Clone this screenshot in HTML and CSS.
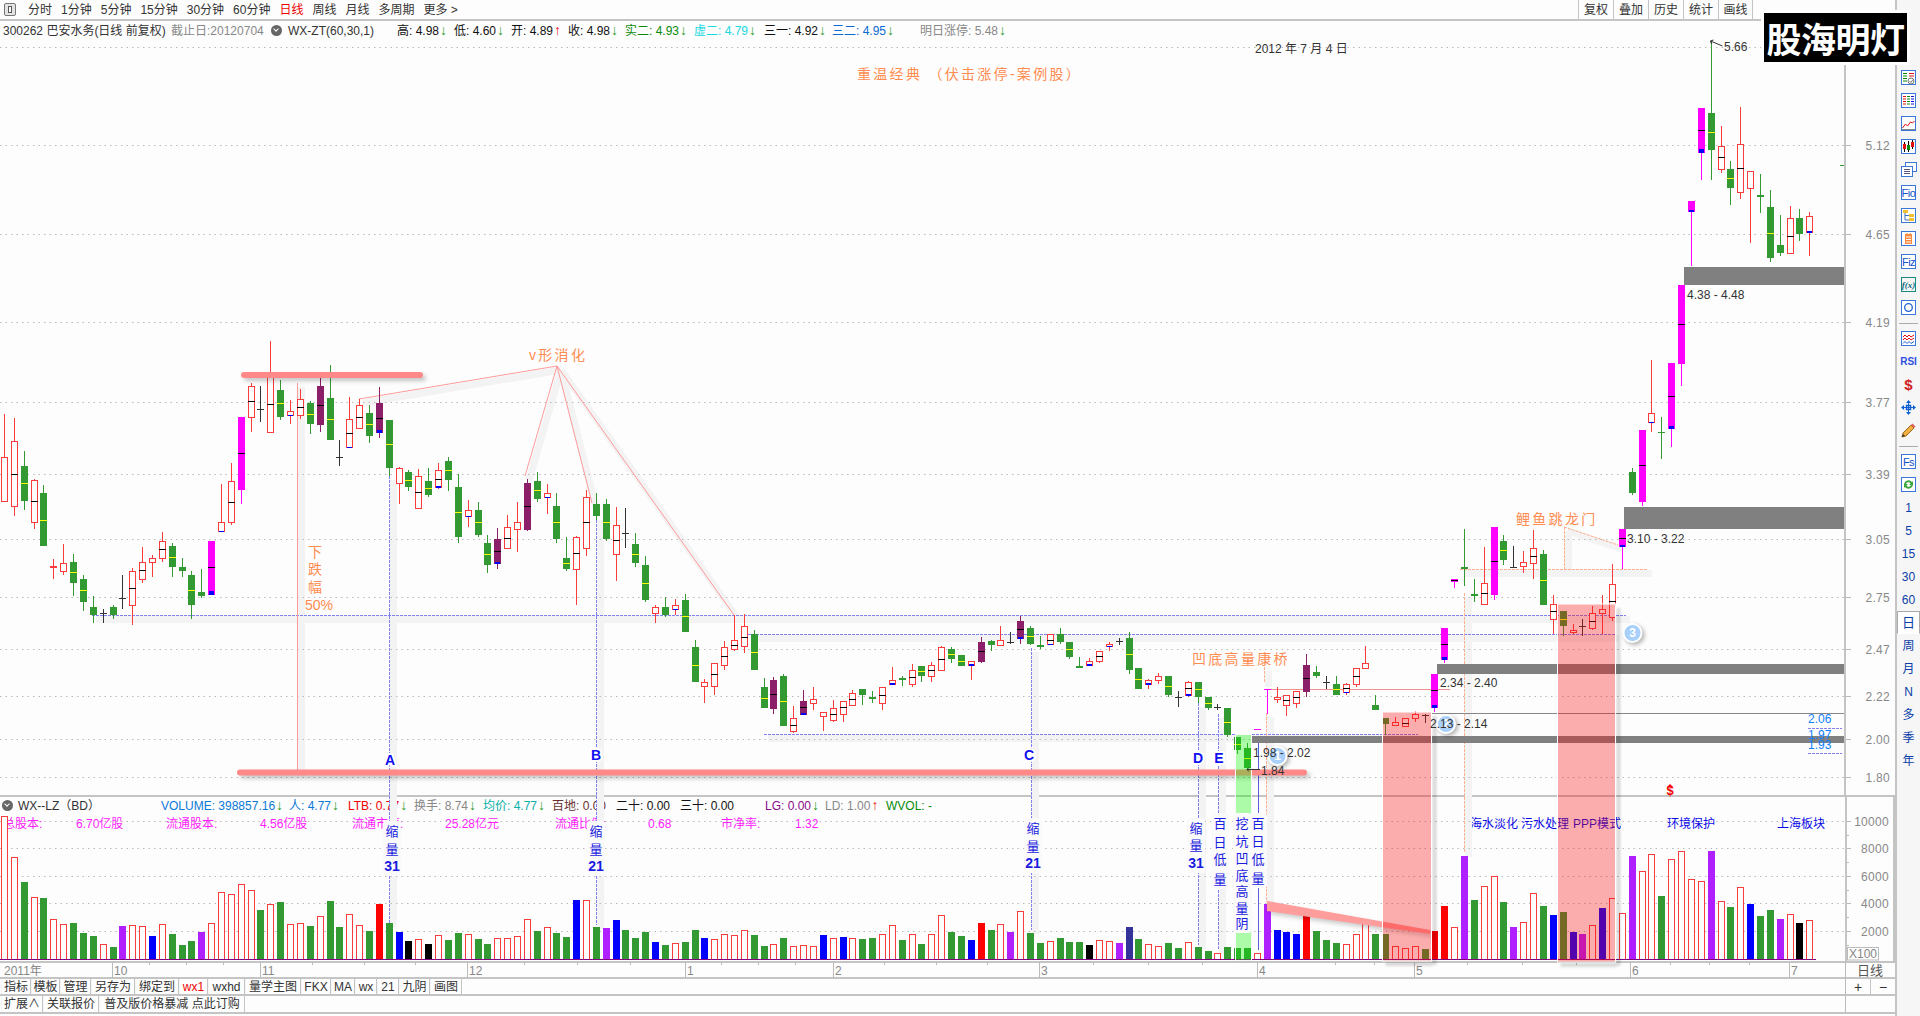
FILE: index.html
```html
<!DOCTYPE html>
<html lang="zh-CN">
<head>
<meta charset="utf-8">
<title>300262 巴安水务 日线</title>
<link rel="stylesheet" href="styles.css">
</head>
<body>
<div class="app">
  <main class="stage">
    <header class="topbar">
      <span class="layout-icon"><span class="layout-icon-inner"></span></span>
      <nav class="periods">
        <span>分时</span><span>1分钟</span><span>5分钟</span><span>15分钟</span><span>30分钟</span><span>60分钟</span><span class="active">日线</span><span>周线</span><span>月线</span><span>多周期</span><span>更多 &gt;</span>
      </nav>
      <nav class="tools">
        <span>复权</span><span>叠加</span><span>历史</span><span>统计</span><span>画线</span>
      </nav>
    </header>
    <div class="infobar">
      <span>300262 巴安水务(日线 前复权)</span>
      <span class="gray">截止日:20120704</span>
      <span class="dot"></span>
      <span>WX-ZT(60,30,1)</span>
      <span class="black">高: 4.98<i class="dn">↓</i></span>
      <span class="black">低: 4.60<i class="dn">↓</i></span>
      <span class="black">开: 4.89<i class="up">↑</i></span>
      <span class="black">收: 4.98<i class="dn">↓</i></span>
      <span class="green">实二: 4.93<i class="dn">↓</i></span>
      <span class="cyan">虚二: 4.79<i class="dn">↓</i></span>
      <span class="black">三一: 4.92<i class="dn">↓</i></span>
      <span class="blue">三二: 4.95<i class="dn">↓</i></span>
      <span class="gray">明日涨停: 5.48<i class="dn">↓</i></span>
    </div>
    <div class="pricepane"></div>
    <section class="volpane">
      <div class="volhead">
        <span class="dot"></span>
        <span>WX--LZ（BD）</span>
        <span class="blue2">VOLUME: 398857.16<i class="dn">↓</i></span>
        <span class="blue2">人: 4.77<i class="dn">↓</i></span>
        <span class="red">LTB: 0.77<i class="dn">↓</i></span>
        <span class="gray">换手: 8.74<i class="dn">↓</i></span>
        <span class="teal">均价: 4.77<i class="dn">↓</i></span>
        <span class="brown">百地: 0.00</span>
        <span class="black">二十: 0.00</span>
        <span class="black">三十: 0.00</span>
        <span class="purple">LG: 0.00<i class="dn">↓</i></span>
        <span class="gray">LD: 1.00<i class="up">↑</i></span>
        <span class="green">WVOL: -</span>
      </div>
      <div class="volfacts">
        <span>总股本:</span><span>6.70亿股</span><span>流通股本:</span><span>4.56亿股</span><span>流通市值:</span><span>25.28亿元</span><span>流通比例:</span><span>0.68</span><span>市净率:</span><span>1.32</span>
        <span class="concept">海水淡化</span><span class="concept">污水处理</span><span class="concept">PPP模式</span><span class="concept">环境保护</span><span class="concept">上海板块</span>
      </div>
    </section>
    <div class="dateaxis"><span class="period-name">日线</span></div>
    <div class="btnrow">
      <span>指标</span><span>模板</span><span>管理</span><span>另存为</span><span>绑定到</span><span class="btn-red">wx1</span><span>wxhd</span><span>量学主图</span><span>FKX</span><span>MA</span><span>wx</span><span>21</span><span>九阴</span><span>画图</span>
      <div class="zoom-btns"><span>+</span><span>−</span></div>
    </div>
    <div class="btnrow btnrow-low">
      <span>扩展∧</span><span>关联报价</span><span>普及版价格暴减 点此订购</span>
    </div>
    <svg id="chart" class="chart" width="1895" height="1016" viewBox="0 0 1895 1016"></svg>
  </main>

  <aside class="sidebar">
    <span class="tool"><svg width="15" height="15" viewBox="0 0 15 15"><rect class="ib" x=".5" y=".5" width="14" height="14"/><path d="M2 3.500h4M2 6h4M2 8.500h4M2 11h4" stroke="#0a8a0a"/><path d="M8 3.500h5M8 6h5" stroke="#e01010"/><circle cx="10" cy="11" r="3" fill="#fff" stroke="#777"/><path d="M8.500 11l1.500 1.500 2-3" fill="none" stroke="#777"/></svg></span>
    <span class="tool"><svg width="15" height="15" viewBox="0 0 15 15"><rect class="ib" x=".5" y=".5" width="14" height="14"/><path d="M2 3.500h3M2 6h3M2 8.500h3M2 11h3" stroke="#e01010"/><path d="M6 3.500h3M6 6h3M6 8.500h3M6 11h3" stroke="#0a8a0a"/><path d="M10 3.500h3M10 6h3M10 8.500h3M10 11h3" stroke="#1010e0"/></svg></span>
    <span class="tool"><svg width="15" height="15" viewBox="0 0 15 15"><rect class="ib" x=".5" y=".5" width="14" height="14"/><path d="M1.500 12l3-4 2 2 3-4 2 1 2-2" fill="none" stroke="#e01010"/><path d="M1 13.500h13" stroke="#888"/></svg></span>
    <span class="tool"><svg width="15" height="15" viewBox="0 0 15 15"><rect class="ib" x=".5" y=".5" width="14" height="14"/><path d="M3.500 3v10M7.500 2v11M11.500 1v9" stroke="#000"/><rect x="2" y="5" width="3" height="5" fill="#e01010"/><rect x="6" y="6" width="3" height="5" fill="#0a8a0a"/><rect x="10" y="3" width="3" height="5" fill="#e01010"/></svg></span>
    <span class="tool"><svg width="16" height="15" viewBox="0 0 16 15"><rect class="ib" x="4.500" y=".5" width="11" height="9"/><rect class="ib" x=".5" y="4.500" width="11" height="10"/><path d="M3 7.500h6M3 9.500h6M3 11.500h6" stroke="#557"/></svg></span>
    <span class="tool tbox">Fio</span>
    <span class="tool"><svg width="15" height="15" viewBox="0 0 15 15"><rect class="ib" x=".5" y=".5" width="14" height="14"/><rect x="2" y="2" width="5" height="3" fill="#f0c030"/><rect x="8" y="6" width="5" height="3" fill="#f0c030"/><rect x="8" y="10" width="5" height="3" fill="#f0c030"/><path d="M4 5v7h4M4 7.500h4" fill="none" stroke="#4070c0"/></svg></span>
    <span class="tool"><svg width="15" height="15" viewBox="0 0 15 15"><rect class="ib" x=".5" y=".5" width="14" height="14"/><rect x="4" y="3" width="7" height="10" fill="#fa8a40"/><path d="M6 2v2M9 2v2" stroke="#fa8a40"/><path d="M5 6h5M5 8.500h5M5 11h5" stroke="#fff"/></svg></span>
    <span class="tool tbox">Fiz</span>
    <span class="tool tfx">f(x)</span>
    <span class="tool"><svg width="15" height="15" viewBox="0 0 15 15"><rect class="ib" x=".5" y=".5" width="14" height="14"/><circle cx="7.500" cy="7.500" r="3.800" fill="none" stroke="#2060d0" stroke-width="1.300"/></svg></span>
    <span class="sep"></span>
    <span class="tool"><svg width="15" height="15" viewBox="0 0 15 15"><rect class="ib" x=".5" y=".5" width="14" height="14"/><path d="M2 6l2-2 2 2 2-2 2 2 3-2M2 9l2-2 2 2 2-2 2 2 3-2" fill="none" stroke="#e01010"/><path d="M2 12.500l2-2 2 2 2-2 2 2 3-2" fill="none" stroke="#2060d0"/></svg></span>
    <span class="tool trsi">RSI</span>
    <span class="tool tdollar">$</span>
    <span class="tool"><svg width="15" height="15" viewBox="0 0 15 15"><path d="M7.500 0l2.500 3h-5zM7.500 15l2.500-3h-5zM0 7.500l3-2.500v5zM15 7.500l-3-2.500v5z" fill="#1060d0"/><rect x="5.500" y="5.500" width="4" height="4" fill="none" stroke="#1060d0" stroke-width="1.500"/><path d="M7.500 3v9M3 7.500h9" stroke="#1060d0"/></svg></span>
    <span class="tool"><svg width="15" height="15" viewBox="0 0 15 15"><path d="M1 14l1-4 8-8 3 3-8 8z" fill="#f0b040" stroke="#a06820"/><path d="M10 2l1.500-1.500 3 3-1.500 1.500z" fill="#e06060"/><path d="M1 14l1-3 2 2z" fill="#333"/></svg></span>
    <span class="sep"></span>
    <span class="tool tbox">Fs</span>
    <span class="tool"><svg width="15" height="15" viewBox="0 0 15 15"><rect class="ib" x=".5" y=".5" width="14" height="14"/><path d="M3 7a4.500 4.500 0 0 1 8-2l1-1v4H8l1.500-1.500A2.500 2.500 0 0 0 5 7zM12 8a4.500 4.500 0 0 1-8 2l-1 1V7h4L5.500 8.500A2.500 2.500 0 0 0 10 8z" fill="#3aa83a"/></svg></span>
    <span class="tool num">1</span>
    <span class="tool num">5</span>
    <span class="tool num">15</span>
    <span class="tool num">30</span>
    <span class="tool num">60</span>
    <span class="tool num cur">日</span>
    <span class="tool num">周</span>
    <span class="tool num">月</span>
    <span class="tool num">N</span>
    <span class="tool num">多</span>
    <span class="tool num">季</span>
    <span class="tool num">年</span>
  </aside>

  <div class="logo">股海明灯</div>
</div>
<script src="chart.js"></script>
</body>
</html>
```
FILE: styles.css
```css
* { box-sizing: border-box; }
html, body { margin: 0; height: 100%; overflow: hidden; background: #fdfdfd; }
body { font: 12px/1 "Liberation Sans", "Noto Sans CJK SC", sans-serif; color: #333; }
.app { position: relative; display: flex; width: 1920px; height: 1016px; }
.stage { position: relative; display: flex; flex-direction: column; width: 1895px; height: 1016px; }

.topbar { display: flex; align-items: center; height: 21px; border-bottom: 2px solid #c4c4c4; padding-left: 4px; background: #fdfdfd; flex: none; }
.layout-icon { display: flex; align-items: center; justify-content: center; width: 12px; height: 13px; border: 1px solid #777; border-radius: 2px; background: #e4e4e4; }
.layout-icon-inner { width: 4px; height: 7px; border: 1px solid #555; background: #fff; }
.periods { display: flex; gap: 9px; margin-left: 12px; }
.active { color: #f00000; }
.tools { display: flex; margin-left: auto; margin-right: 142px; height: 19px; }
.tools span { width: 35px; border-left: 1px solid #c4c4c4; display: flex; align-items: center; justify-content: center; }
.tools span:last-child { border-right: 1px solid #c4c4c4; }

.infobar { display: grid; grid-template-columns: 168px 100px 17px 109px 57px 57px 57px 57px 69px 70px 68px 88px auto; align-items: center; height: 19px; padding-left: 3px; flex: none; white-space: nowrap; }
.dot { width: 11px; height: 11px; border-radius: 50%; background: #666; position: relative; display: block; }
.dot::after { content: ""; position: absolute; left: 3px; top: 2px; width: 3px; height: 3px; border-right: 1px solid #fff; border-bottom: 1px solid #fff; transform: rotate(45deg); }
i { font-style: normal; font-size: 14px; line-height: 0; margin-left: 1px; }
.dn { color: #2a9a2a; }
.up { color: #f02020; }
.gray { color: #888; }
.black { color: #111; }
.green { color: #0a8a0a; }
.cyan { color: #20d8e0; }
.blue { color: #0a6ad0; }
.blue2 { color: #0a7ad8; }
.red { color: #f00000; }
.teal { color: #08b0a8; }
.brown { color: #6a3030; }
.purple { color: #8a0a8a; }

.pricepane { flex: none; height: 757px; border-bottom: 2px solid #c4c4c4; }
.volpane { flex: none; height: 166px; border-bottom: 2px solid #c4c4c4; white-space: nowrap; }
.volhead { display: grid; grid-template-columns: 16px 143px 128px 59px 66px 69px 69px 64px 64px 85px 60px 61px auto; align-items: center; height: 17px; padding-left: 2px; }
.volfacts { display: grid; grid-template-columns: 73px 90px 94px 92px 93px 110px 93px 73px 74px 675px 51px 52px 94px 110px auto; align-items: center; height: 19px; padding-left: 3px; color: #ff20ff; }
.concept { color: #0808e8; }

.dateaxis { flex: none; height: 16px; display: flex; justify-content: flex-end; border-bottom: 2px solid #c4c4c4; color: #555; }
.period-name { width: 50px; display: flex; align-items: center; justify-content: center; font-size: 13px; }
.btnrow { flex: none; display: flex; height: 17px; border-bottom: 2px solid #c4c4c4; padding-left: 1px; color: #333; white-space: nowrap; }
.btnrow > span { display: flex; align-items: center; justify-content: center; flex: none; border-right: 1px solid #c4c4c4; border-left: 1px solid #f4f4f4; }
.btnrow > span:nth-child(1) { width: 30px; }
.btnrow > span:nth-child(2) { width: 29px; }
.btnrow > span:nth-child(3) { width: 31px; }
.btnrow > span:nth-child(4) { width: 44px; }
.btnrow > span:nth-child(5) { width: 44px; }
.btnrow > span:nth-child(6) { width: 29px; }
.btnrow > span:nth-child(7) { width: 37px; }
.btnrow > span:nth-child(8) { width: 56px; }
.btnrow > span:nth-child(9) { width: 30px; }
.btnrow > span:nth-child(10) { width: 24px; }
.btnrow > span:nth-child(11) { width: 22px; }
.btnrow > span:nth-child(12) { width: 22px; }
.btnrow > span:nth-child(13) { width: 31px; }
.btnrow > span:nth-child(14) { width: 32px; }
.btn-red { color: #f00000; }
.zoom-btns { display: flex; margin-left: auto; width: 50px; }
.zoom-btns span { flex: 1; display: flex; align-items: center; justify-content: center; border-left: 1px solid #c4c4c4; font-size: 14px; }
.btnrow-low { height: 18px; }
.btnrow-low > span:nth-child(1) { width: 42px; }
.btnrow-low > span:nth-child(2) { width: 56px; }
.btnrow-low > span:nth-child(3) { width: 146px; }

.chart { position: absolute; left: 0; top: 0; pointer-events: none; }

.sidebar { width: 25px; height: 1016px; padding-top: 66px; border-left: 2px solid #c4c4c4; background: #f6f6f6; display: flex; flex-direction: column; align-items: center; flex: none; }
.tool { height: 23px; width: 23px; flex: none; display: flex; align-items: center; justify-content: center; color: #1450c8; }
.ib { fill: #fff; stroke: #3a78d8; }
.sep { flex: none; width: 19px; height: 1px; background: #aaa; margin: 4px 0 3px; }
.tbox { font: 400 11px "Liberation Sans", sans-serif; letter-spacing: -.5px; background: #fff; background-clip: content-box; padding: 4px; box-shadow: inset 0 0 0 4px #f6f6f6, inset 0 0 0 5px #3a78d8; }
.tfx { font: italic 700 9px "Liberation Serif", serif; color: #0a6a80; box-shadow: inset 0 0 0 4px #f6f6f6, inset 0 0 0 5px #1a8a80; }
.trsi { font: 700 10px "Liberation Sans", sans-serif; color: #3050e0; }
.tdollar { font: 700 15px "Liberation Sans", sans-serif; color: #d02020; }
.num { font-size: 12px; color: #0a3ea8; }
.cur { background: #fff; border: 1px solid #aaa; border-bottom-color: #fff; font-size: 13px; }

.logo { position: absolute; left: 1761px; top: 10px; width: 149px; height: 55px; border: 3px solid #fff; background: #000; color: #fff; font: 700 35px/49px "Noto Sans CJK SC", sans-serif; text-align: center; letter-spacing: -.5px; white-space: nowrap; overflow: hidden; }

/* chart */
.grid { stroke: #bbb; stroke-dasharray: 1.5 4; stroke-width: 1; }
.solid { stroke: #bbb; }
.crisp { shape-rendering: crispEdges; }
.s-r { stroke: #fa3c3c; fill: none; }
.s-g { stroke: #339933; fill: none; }
.s-m { stroke: #ff00ff; fill: none; }
.s-p { stroke: #8b2068; fill: none; }
.s-d { stroke: #333; fill: none; }
.hollow { fill: #fdfdfd; stroke: #fa3c3c; }
.vhollow { fill: #fdfdfd; stroke: #fa3c3c; }
.f-g { fill: #339933; }
.f-m { fill: #ff00ff; }
.f-p { fill: #8b2068; }
.f-b { fill: #0000ff; }
.f-k { fill: #000; }
.f-v { fill: #b01fff; }
.f-R { fill: #ff0000; }
.f-n { fill: #333399; }
.mid-y { stroke: #ffff00; }
.mid-k { stroke: #000; }
.base { stroke: #800080; }
.band { fill: #808080; }
.hline { stroke: #888; }
.lshadow { stroke: #f3f3f3; stroke-width: 7; fill: none; }
.dash { stroke: #8080f4; stroke-dasharray: 3 1; fill: none; }
.dash-o { stroke: #ffb090; stroke-dasharray: 3 1; fill: none; }
.lblue { stroke: #5a5ae0; }
.lred { stroke: #ff9a9a; fill: none; }
.lred2 { stroke: #f09090; }
.redbar { stroke: #ff8888; stroke-width: 6; stroke-linecap: round; filter: drop-shadow(3px 3px 2px rgba(0,0,0,.22)); }
.wedge { fill: #ff9c9c; filter: drop-shadow(3px 3px 2px rgba(0,0,0,.2)); }
.ov-r { fill: rgba(250,10,10,.33); stroke: #fff; }
.ov-sh { fill: rgba(0,0,0,.14); filter: blur(1px); }
.ov-g { fill: rgba(10,250,0,.33); stroke: #f8f8f8; }
.halo { fill: #fafafa; }
text { font-family: "Liberation Sans", "Noto Sans CJK SC", sans-serif; font-size: 12px; }
.t-axis { fill: #888; text-anchor: end; letter-spacing: .3px; }
.t-date { fill: #888; }
.t-dark { fill: #333; }
.t-or { fill: #ff8c50; font-size: 14px; letter-spacing: 2.3px; }
.t-or2 { fill: #ff8c50; font-size: 14px; text-anchor: middle; }
.t-abc { fill: #1010f0; font-weight: 700; font-size: 14px; text-anchor: middle; paint-order: stroke; stroke: #fff; stroke-width: 4px; }
.t-vert { fill: #1a1ae0; font-size: 13px; text-anchor: middle; }
.t-vert.n { font-weight: 700; font-size: 14px; }
.t-lab { fill: #1080ff; }
.t-circ { fill: #fff; font-weight: 700; text-anchor: middle; }
.t-s { fill: #f00000; font-weight: 700; font-size: 13px; text-anchor: middle; }
.circ { fill: #a8d0fa; stroke: #fff; stroke-width: 2; filter: drop-shadow(2px 2px 2px rgba(0,0,0,.3)); }
.tick-g { stroke: #339933; }
.t-x100 { fill: #888; }
.boxline { stroke: #bbb; fill: none; }
.boxline2 { stroke: #c4c4c4; stroke-width: 2; fill: none; }
```
FILE: chart.js
```js
// Day-bar data read as [high, top, bottom, low, type, mid, blueHeight]
// y values are in 3x units relative to each segment's origin.
const segments = [
  [340, [
    [222,352,485,485,'r'],[234,304,500,528,'r',403],[333,378,483,510,'g',430],[418,421,548,567,'r',484],[435,459,618,618,'g',541],
    [658,677,683,717,'r'],[612,670,695,705,'r'],[642,666,729,768,'g',697],[705,717,786,813,'g',751],[768,801,826,849,'g'],
    [807,820,821,849,'d'],[795,801,826,837,'g'],[705,775,776,807,'d'],[685,694,797,855,'r',745],[621,667,719,729,'r',691],
    [645,655,670,711,'r'],[576,604,656,666,'r',628],[609,618,681,711,'g',652],[654,681,693,711,'g'],[693,705,795,837,'g',751],
    [687,756,768,774,'g'],[603,603,765,765,'m',682,4],[432,547,575,575,'r',null,1],[369,424,548,555,'r',487],[231,231,450,492,'m',340],
    [129,139,233,276,'r',184],[138,208,209,246,'d'],[3,112,278,278,'r',193],[120,150,231,240,'g',190],[180,214,228,252,'r',null,1],
    [147,178,228,237,'r',202],[183,189,252,282,'g',223],[108,138,255,276,'p',196],[75,174,300,300,'g',238],[300,352,353,378,'d'],
    [171,238,324,324,'r',280,1],[178,196,266,266,'r',232],[195,219,288,309,'g',253],[141,189,279,294,'p',235,3],[240,240,384,408,'g',313],
    [381,385,431,492,'r'],[390,396,441,453,'g',421],[387,409,506,506,'r',457],[384,423,465,471,'g',445],[369,391,444,447,'r',418,2],
    [351,363,420,453,'g',391],[402,441,591,609,'g',517],[480,511,530,561,'r',null,1],[486,510,585,591,'g',547],
    [585,609,675,699,'g',643],[564,597,672,687,'p',634,2],[525,562,626,626,'r',595],[486,547,569,636,'r'],[418,429,570,573,'p',498],
    [396,423,477,486,'g',451],[432,460,473,522,'r',null,1],[459,498,597,609,'g',547],[591,654,687,693,'g',669],[588,592,689,795,'r',639],
    [450,472,626,648,'r',547],[459,492,528,540,'g'],[477,492,597,603,'g',547],[501,556,644,723,'r',601],[504,579,581,624,'d'],
    [579,612,669,681,'g',642],[648,675,780,786,'g',730],[795,802,821,849,'r'],[772,801,826,831,'g'],[777,796,809,825,'r',null,1],
    [762,780,876,876,'g',829],[900,921,1026,1026,'g',976],[1017,1027,1040,1089,'r'],[970,970,1040,1065,'r',1003],[903,922,977,990,'r',949],
    [825,901,929,932,'r',916],[822,859,922,939,'r',892],[870,882,990,990,'g',937],[1014,1041,1104,1104,'g',1075],[1011,1020,1107,1122,'p',1063],
    [1002,1008,1158,1158,'g',1084],[1098,1135,1175,1179,'r',1156],[1050,1083,1125,1125,'p',1102,2],[1041,1078,1091,1110,'r'],[1117,1117,1130,1173,'r'],
    [1080,1105,1142,1145,'r',1123],[1084,1084,1124,1146,'r',1102],[1050,1060,1097,1097,'r',1078],[1047,1047,1065,1095,'g'],[1053,1072,1076,1089,'g'],
    [1042,1042,1091,1110,'r',1066],[981,1021,1034,1034,'r',null,2],[1008,1014,1019,1038,'g'],[972,991,1034,1041,'r',1012],[978,978,1008,1026,'g',994],
    [966,976,1010,1026,'r',991],[918,922,992,992,'r',958],[921,927,957,969,'g',943],[945,945,978,978,'g',962]
  ]],
  [480, [
    [544,544,558,600,'r',null,2],[471,486,546,549,'p',514],[480,484,495,513,'g'],[438,481,498,498,'r'],[456,487,488,492,'d'],
    [408,423,477,492,'p',448,2],[438,444,492,495,'g',468],[468,496,500,507,'g'],[462,463,496,496,'r',481,1],[444,462,486,492,'g'],
    [486,486,531,537,'g',508],[531,558,564,564,'g'],[534,544,557,557,'r',null,2],[513,514,545,549,'r',529],[486,493,502,513,'r',null,1],
    [474,483,484,495,'d'],[456,474,570,582,'g',523],[564,564,627,627,'g',598],[597,601,614,627,'r',null,2],[579,589,603,612,'r'],
    [588,588,645,651,'g',619],[633,652,653,681,'d'],[603,607,648,651,'r',625,2],[606,606,651,669,'g',628],[651,651,684,690,'g',670],
    [672,681,682,690,'d'],[684,684,765,771,'g',727],[771,771,810,822,'g',793],[789,804,864,870,'g',835],[748,748,750,748,'m'],
    [628,628,630,702,'m'],[621,652,659,669,'r'],[646,646,677,708,'r',661],[633,634,671,684,'r',652],[522,555,636,651,'p',595],
    [558,576,588,594,'g'],[588,607,608,627,'d'],[588,612,645,645,'g',628],[609,613,640,645,'r',625,1],[564,565,614,621,'r',589],
    [498,550,566,566,'r'],[645,675,690,690,'g'],[714,714,732,765,'g'],[712,727,739,739,'r'],[715,715,742,742,'r',730],
    [693,703,718,726,'r'],[702,706,707,730,'d'],[582,582,684,696,'m',631,3],
    [444,444,540,549,'m',493,3],[297,298,305,324,'m',301],[148,262,267,318,'g'],[297,343,347,366,'g'],[201,310,374,374,'r',340],
    [141,141,345,360,'m',244],[165,183,240,255,'g',211],[198,262,263,264,'d'],[213,247,262,279,'r'],[150,205,252,297,'r',229],
    [210,222,375,375,'g',300],[345,373,419,462,'r',394],[393,393,438,468,'g',417],[432,451,458,462,'r'],[417,438,439,468,'d'],
    [378,400,447,450,'r',424],[345,388,401,462,'r'],[252,313,413,423,'r',364],[148,148,200,267,'m',175,2]
  ]],
  [350, [
    [354,366,429,435,'g'],[240,240,456,468,'m',346],[30,190,218,246,'r',null,1],[201,247,250,327,'g'],[39,39,237,291,'m',139,3]
  ]],
  [30, [
    [765,765,1002,1068,'m',883],[513,513,546,708,'m',null,2],[234,234,369,450,'m',301,4],[33,249,360,450,'g',307],[288,349,419,429,'r',382],
    [393,417,474,525,'g',445],[231,343,488,507,'r',415],[424,424,476,639,'r'],[432,496,500,549,'g'],[480,531,684,696,'g',610],
    [555,645,669,678,'g'],[528,565,671,671,'r',619],[537,564,612,633,'g'],[546,559,609,678,'r',null,2]
  ]]
];

// Volume: top (3x units from y=780) + colour code for each bar, same order as days.
const volume = `
109r 232r 306g 352r 354g 418r 433r 429g 459g 468g
493r 501g 438v 436r 439r 468b 433r 462g 495g 483g
456v 430r 337r 343r 313r 331r 390g 372r 366g 433r
430r 438g 409r 363g 441g 403r 436r 453g 372R 429g
456b 483k 478r 492k 466r 480g 459g 463r 477g 492g
475r 475r 469r 418r 453g 441r 459g 471g 360b 361r
441g 444v 420b 450g 474g 456g 486b 495g 489r 486g
450g 474b 478r 462r 465r 450r 465g 498g 492r 474g
498r 495r 498r 465b 474r 471b 474r 477g 474g 462r
435r 480g 462r 492g 462r 405r 456g 468g 480b 429R
450g 432r 456v 393r 459g 489g 483r 474g 486g 486g
495k 480r 483r 489v 441n 477g 492r 498r 489g 504g
486r 501g 513g 519r 501g 504g 504g 519r 372v 450b
456b 462b 387R 453g 480g 489g 492r 462r 426r 462g
462g 498r 504r 498r 507g 453R 378R 441r 228v 360g
318r 288r 366g 441v 426r 339r 378g 405b 396g 456b
462v 435r 384b 354r 399r 228v 273r 222r 348g 237r
213r 297r 303r 213v 363r 381g 321r 372b 408g 390g
417v 402r 429k 420r`;

const GRID = [47,145,234,322,402,474,539,597,649,696,739,777];
const X = i => Math.floor(4.5 + 9.865 * i);
const out = { shadow: '', grid: '', lines: '', bars: '', bands: '', over: '', top: '' };

const line = (x1, y1, x2, y2, cls) => `<line x1="${x1}" y1="${y1}" x2="${x2}" y2="${y2}" class="${cls}"/>`;
const rect = (x, y, w, h, cls) => `<rect x="${x}" y="${y}" width="${w}" height="${h}" class="${cls}"/>`;
const text = (x, y, s, cls) => `<text x="${x}" y="${y}" class="${cls}">${s}</text>`;

function sline(x1, y1, x2, y2, cls) {
  out.shadow += line(x1 + 4, y1 + 4, x2 + 4, y2 + 4, 'lshadow');
  out.lines += line(x1, y1, x2, y2, cls);
}

// ---- grid
const priceLabels = { 145:'5.12', 234:'4.65', 322:'4.19', 402:'3.77', 474:'3.39', 539:'3.05', 597:'2.75', 649:'2.47', 696:'2.22', 739:'2.00', 777:'1.80' };
GRID.forEach(y => {
  out.grid += line(0, y + .5, 1844, y + .5, 'grid');
  if (priceLabels[y]) {
    out.grid += line(1845, y + .5, 1851, y + .5, 'solid');
    out.grid += text(1890, y + 4.5, priceLabels[y], 't-axis');
  }
});
[[821,'10000'],[848,'8000'],[876,'6000'],[903,'4000'],[931,'2000']].forEach(([y, s]) => {
  out.grid += line(0, y + .5, 1844, y + .5, 'grid');
  out.grid += line(1846, y + .5, 1851, y + .5, 'solid');
  out.grid += line(1846, y + 14.5, 1849, y + 14.5, 'solid');
  out.grid += text(1889, y + 4.5, s, 't-axis');
});
// ---- axis frame
out.grid += line(1845, 60, 1845, 796, 'boxline2');
out.grid += line(1846, 796, 1846, 961, 'boxline2');
out.grid += line(1845.5, 961, 1845.5, 1013, 'boxline');
out.grid += line(1894, 796, 1894, 961, 'boxline2');
out.grid += line(1840, 165.5, 1844, 165.5, 'tick-g');
out.grid += `<rect x="1847.500" y="947.500" width="31" height="12.500" class="boxline"/>`;
out.grid += text(1849, 958, 'X100', 't-x100');

// ---- date axis
[[4,'2011年',0],[114,'10',112],[262,'11',260],[469,'12',467],[687,'1',685],[835,'2',833],[1041,'3',1039],[1259,'4',1257],[1416,'5',1414],[1632,'6',1630],[1791,'7',1789]].forEach(([x, s, t]) => {
  if (t) out.grid += line(t + .5, 962, t + .5, 978, 'solid');
  out.grid += text(x, 975, s, 't-date');
});
[149,186,223,312,364,415,524,577,630,721,758,795,884,936,987,1093,1148,1202,1335,1374,1467,1522,1576,1670,1709,1749].forEach(x => {
  out.grid += line(x + .5, 962, x + .5, 965, 'solid');
});

// ---- connecting lines
const D = 'dash crisp';
sline(389.5, 476, 389.5, 923, D);
sline(596.5, 516, 596.5, 925, D);
sline(1031.5, 648, 1031.5, 930, D);
sline(1198.5, 703, 1198.5, 945, D);
sline(1218.5, 714, 1218.5, 950, D);
sline(92, 615.5, 1626, 615.5, D);
sline(748, 634.5, 1615, 634.5, D);
sline(764, 734.5, 1418, 734.5, D);
sline(297.5, 383, 297.5, 772, 'lred');
sline(359, 399, 557, 366, 'lred');
sline(525, 476, 557, 366, 'lred');
sline(592, 503, 557, 366, 'lred');
sline(734, 615, 557, 366, 'lred');
sline(1266.5, 713, 1266.5, 902, 'dash-o');
sline(1464.5, 593, 1464.5, 853, 'dash-o');
sline(1460, 569.5, 1648, 569.5, 'dash-o');
sline(1564.5, 527, 1564.5, 569, 'dash-o');
sline(1564, 527, 1618, 545, 'dash-o');
sline(1264.5, 667, 1264.5, 683, 'dash-o');
out.lines += line(1267, 689.5, 1450, 689.5, 'lred2');
out.lines += line(1258.5, 743, 1258.5, 950, 'lblue');
out.lines += line(1808, 728.5, 1842, 728.5, 'dash crisp');
out.lines += line(1808, 753.5, 1842, 753.5, 'dash crisp');
out.lines += line(1431, 713.5, 1844, 713.5, 'hline');

// ---- candles and volume bars
let idx = 0;
const vols = volume.trim().split(/\s+/);
segments.forEach(([oy, items]) => {
  const Y = v => Math.round(oy + v / 3);
  items.forEach(([hi, top, bot, lo, t, mid, blue]) => {
    const cx = X(idx), px = cx + .5;
    const yh = Y(hi), yt = Y(top), yb = Math.max(Y(bot), yt + 1), yl = Y(lo);
    if (t === 'd') {
      out.bars += line(px, yh, px, yl, 's-d') + line(cx - 3, yt + .5, cx + 4, yt + .5, 's-d');
    } else {
      if (yh < yt) out.bars += line(px, yh, px, yt, 's-' + t);
      if (yl > yb) out.bars += line(px, yb, px, yl, 's-' + t);
      if (t === 'r') {
        out.bars += rect(cx - 3 + .5, yt + .5, 6, Math.max(yb - yt - 1, 1), 'hollow');
      } else {
        out.bars += rect(cx - 3, yt, 7, yb - yt, 'f-' + t);
      }
      if (mid) {
        const my = Y(mid) + .5;
        out.bars += line(cx - 3, my, cx + 4, my, t === 'g' ? 'mid-y' : 'mid-k');
      }
      if (blue) out.bars += rect(cx - 2, yb - blue, 5, blue, 'f-b');
    }
    // volume bar
    const m = /^(\d+)(\w)$/.exec(vols[idx] || '');
    if (m) {
      const vy = Math.round(780 + +m[1] / 3), c = m[2];
      if (c === 'r') out.bars += rect(cx - 3 + .5, vy + .5, 6, 960 - vy - 1, 'vhollow');
      else out.bars += rect(cx - 3, vy, 7, 960 - vy, 'f-' + c);
    }
    idx++;
  });
});
out.bars += line(0, 959.5, 1816, 959.5, 'base');

// ---- gray bands
out.bands += rect(1684, 267, 160, 18, 'band');
out.bands += rect(1624, 507, 220, 22, 'band');
out.bands += rect(1437, 664, 407, 10, 'band');
out.bands += rect(1251, 736, 593, 7, 'band');

// ---- overlays
out.over += `<line x1="244" y1="375" x2="420" y2="375" class="redbar"/>`;
out.over += `<line x1="240" y1="772.500" x2="1304" y2="772.500" class="redbar"/>`;
out.over += `<polygon points="1267,901 1267,911 1430,934 1430,930" class="wedge"/>`;
[[1382.5, 712, 49, 249], [1557.5, 604, 58, 358]].forEach(([x, y, w, h]) => {
  out.over += rect(x + w + 1, y + 4, 4, h, 'ov-sh');
  out.over += rect(x + 3, y + h + 1, w - 2, 4, 'ov-sh');
  out.over += rect(x, y, w, h, 'ov-r');
});
out.over += rect(1235.5, 734.5, 16, 226, 'ov-g');

// ---- labels
const vert = (x, ys, chars) => {
  const top = ys[0] - 10, h = ys[ys.length - 1] - ys[0] + 20;
  out.top += `<rect x="${x - 9}" y="${top}" width="18" height="${h}" rx="3" class="halo"/>`;
  chars.forEach((ch, k) => {
    out.top += text(x, ys[k] + 5, ch, 't-vert' + (/\d/.test(ch) ? ' n' : ''));
  });
};
vert(392, [831, 849, 866], ['缩', '量', '31']);
vert(596, [831, 849, 866], ['缩', '量', '21']);
vert(1033, [828, 846, 863], ['缩', '量', '21']);
vert(1196, [828, 845, 863], ['缩', '量', '31']);
vert(1220, [823, 842, 859, 879], ['百', '日', '低', '量']);
vert(1242, [823, 841, 858, 875, 891, 908, 923], ['挖', '坑', '凹', '底', '高', '量', '阴']);
vert(1258, [823, 841, 859, 878], ['百', '日', '低', '量']);

[[390,'A'],[596,'B',755],[1029,'C',755],[1198,'D',758],[1219,'E',758]].forEach(([x, s, cy]) => {
  out.top += text(x, (cy || 760) + 5, s, 't-abc');
});

out.top += text(857, 79, '重温经典 （伏击涨停-案例股）', 't-or');
out.top += text(529, 360, 'v形消化', 't-or');
out.top += text(1192, 664, '凹底高量康桥', 't-or');
out.top += text(1516, 524, '鲤鱼跳龙门', 't-or');
[['下', 557], ['跌', 574], ['幅', 592]].forEach(([s, y]) => { out.top += text(315, y, s, 't-or2'); });
out.top += text(319, 610, '50%', 't-or2');

out.top += text(1255, 53, '2012 年 7 月 4 日', 't-dark');
out.top += `<path d="M1710.500 41l12 5M1710.500 41l3-1M1710.500 41l1 3" class="s-d"/>`;
out.top += text(1724, 51, '5.66', 't-dark');
out.top += `<path d="M1247 769.500h13M1247 769.500l2-2M1247 769.500l2 2" class="s-d"/>`;

[[1277.5, 756, '1'], [1446, 724, '2'], [1632.5, 633, '3']].forEach(([x, y, s]) => {
  out.top += `<circle cx="${x}" cy="${y}" r="9" class="circ"/>` + text(x, y + 4, s, 't-circ');
});
out.top += text(1687, 299, '4.38 - 4.48', 't-dark');
out.top += text(1627, 543, '3.10 - 3.22', 't-dark');
out.top += text(1440, 687, '2.34 - 2.40', 't-dark');
out.top += text(1430, 728, '2.13 - 2.14', 't-dark');
out.top += text(1253, 757, '1.98 - 2.02', 't-dark');
out.top += text(1261, 775, '1.84', 't-dark');
out.top += text(1808, 723, '2.06', 't-lab');
out.top += text(1808, 739, '1.97', 't-lab');
out.top += text(1808, 749, '1.93', 't-lab');
out.top += text(1670, 795, '$', 't-s');
out.top += `<path d="M1670 784l3 3h-6z" class="f-R"/>`;

document.getElementById('chart').innerHTML =
  out.shadow + out.grid + out.lines + `<g class="crisp">${out.bars}${out.bands}</g>` + out.over + out.top;
```
